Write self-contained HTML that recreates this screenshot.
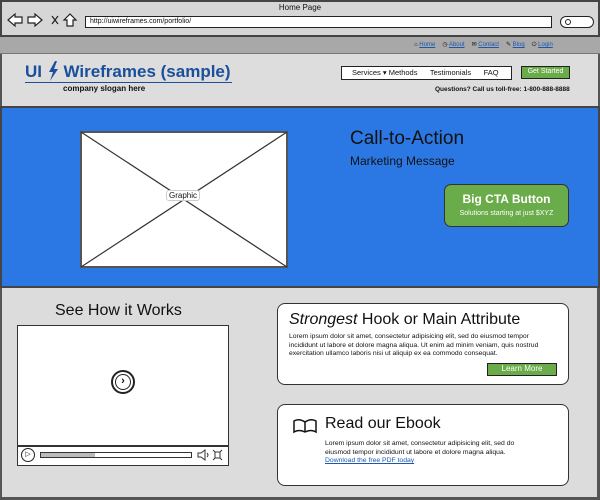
<!DOCTYPE html>
<html><head><style>
*{margin:0;padding:0;box-sizing:border-box}
body{width:600px;height:500px;overflow:hidden;background:#dcdcdc;font-family:"Liberation Sans",sans-serif;position:relative;color:#111}
.a{position:absolute}
a{color:#1a57b0;text-decoration:underline}
</style></head><body>
<!-- browser chrome -->
<div class="a" style="left:0;top:0;width:600px;height:37px;background:#d6d6d6;border:2px solid #444"></div>
<div class="a" style="left:0;top:3px;width:600px;text-align:center;font-size:8px">Home Page</div>
<svg class="a" style="left:6px;top:12px" width="76" height="16" viewBox="0 0 76 16" fill="#fff" stroke="#222" stroke-width="1.2">
<path d="M2 8 L9 2 V5 H16 V11 H9 V14 Z"/>
<path d="M36 8 L29 2 V5 H22 V11 H29 V14 Z"/>
<path d="M46 4 L52 12 M52 4 L46 12" fill="none"/>
<path d="M58 8 L64 2 L70 8 H67 V14 H61 V8 Z"/>
</svg>
<div class="a" style="left:85px;top:16px;width:467px;height:12px;background:#fff;border:1.5px solid #222;font-size:7px;padding-left:4px;line-height:9px">http://uiwireframes.com/portfolio/</div>
<div class="a" style="left:560px;top:16px;width:34px;height:12px;background:#fff;border:1.5px solid #222;border-radius:7px"><div style="position:absolute;left:4px;top:2px;width:6px;height:6px;border:1.2px solid #222;border-radius:50%"></div></div>
<!-- dark bar -->
<div class="a" style="left:0;top:37px;width:600px;height:17px;background:#a8a8a8;border-bottom:1px solid #777"></div>
<div class="a" style="left:414px;top:41px;height:9px;font-size:6px;line-height:9px;display:flex;gap:7px;align-items:center;white-space:nowrap">
<span>⌂ <a>Home</a></span><span>◷ <a>About</a></span><span>✉ <a>Contact</a></span><span>✎ <a>Blog</a></span><span>⏻ <a>Login</a></span></div>
<!-- header -->
<div class="a" style="left:0;top:54px;width:600px;height:52px;background:#dddddd;border-left:2px solid #555;border-right:2px solid #555"></div>
<div class="a" style="left:25px;top:61px;width:207px;font-size:17px;font-weight:bold;color:#1a4f9c;border-bottom:1.5px solid #1a4f9c;line-height:20px;white-space:nowrap">UI <svg width="12" height="20" style="vertical-align:-4px"><path d="M8 0 L2 11 H6 L3 20 L11 8 H7 L10 0 Z" fill="#1a4f9c"/></svg> Wireframes (sample)</div>
<div class="a" style="left:63px;top:84px;font-size:8px;font-weight:bold">company slogan here</div>
<div class="a" style="left:341px;top:66px;width:171px;height:14px;background:#fff;border:1.5px solid #222;font-size:7.5px;line-height:11px;padding-left:10px;white-space:nowrap">Services ▾ Methods &nbsp;&nbsp;&nbsp;&nbsp; Testimonials &nbsp;&nbsp;&nbsp;&nbsp; FAQ</div>
<div class="a" style="left:521px;top:66px;width:49px;height:13px;background:#6aab4a;border:1.5px solid #222;color:#fff;font-size:7px;text-align:center;line-height:10px">Get Started</div>
<div class="a" style="left:435px;top:86px;font-size:6.5px;font-weight:bold;white-space:nowrap">Questions? Call us toll-free: 1-800-888-8888</div>
<!-- hero -->
<div class="a" style="left:0;top:106px;width:600px;height:182px;background:#2b78e4;border:2px solid #444"></div>
<svg class="a" style="left:80px;top:131px" width="208" height="137"><rect x="1" y="1" width="206" height="135" fill="#fff" stroke="#555" stroke-width="2"/><path d="M1 1 L207 136 M207 1 L1 136" stroke="#333" stroke-width="1.2"/></svg>
<div class="a" style="left:166px;top:190px;background:#fff;border:1px solid #ccc;border-radius:3px;font-size:8px;padding:0 2px">Graphic</div>
<div class="a" style="left:350px;top:128px;font-size:19px;color:#111">Call-to-Action</div>
<div class="a" style="left:350px;top:154px;font-size:12px;color:#111">Marketing Message</div>
<div class="a" style="left:444px;top:184px;width:125px;height:43px;background:#6aab4a;border:1.5px solid #333;border-radius:7px;color:#fff;text-align:center">
<div style="font-size:12px;font-weight:bold;margin-top:7px">Big CTA Button</div><div style="font-size:7px;margin-top:4px">Solutions starting at just $XYZ</div></div>
<!-- bottom -->
<div class="a" style="left:0;top:288px;width:600px;height:212px;border-left:2px solid #555;border-right:3px solid #555"></div>
<div class="a" style="left:55px;top:302px;font-size:16px">See How it Works</div>
<div class="a" style="left:17px;top:325px;width:212px;height:141px;background:#fff;border:1.5px solid #333"></div>
<div class="a" style="left:111px;top:370px;width:24px;height:24px;border:2px solid #222;border-radius:50%"><div style="position:absolute;left:2px;top:2px;width:16px;height:16px;border:1.5px solid #222;border-radius:50%;font-size:11px;font-weight:bold;text-align:center;line-height:13px">›</div></div>
<div class="a" style="left:17px;top:445px;width:212px;height:1.5px;background:#333"></div>
<div class="a" style="left:21px;top:448px;width:14px;height:14px;border:1.2px solid #222;border-radius:50%;font-size:7px;text-align:center;line-height:12px">▷</div>
<div class="a" style="left:40px;top:452px;width:152px;height:6px;border:1px solid #333;background:linear-gradient(90deg,#bbb 36%,#fff 36%)"></div>
<svg class="a" style="left:196px;top:448px" width="28" height="14" fill="none" stroke="#333" stroke-width="1"><path d="M2 5 H5 L9 2 V12 L5 9 H2 Z M11 5 Q13 7 11 9"/><path d="M17 2 L19 4 H24 L26 2 M17 12 L19 10 H24 L26 12 M19 4 V10 M24 4 V10"/></svg>
<div class="a" style="left:277px;top:303px;width:292px;height:82px;background:#fff;border:1.5px solid #333;border-radius:8px"></div>
<div class="a" style="left:289px;top:311px;font-size:16px;white-space:nowrap"><i>Strongest</i> Hook or Main Attribute</div>
<div class="a" style="left:289px;top:333px;width:270px;font-size:6.8px;line-height:8.7px">Lorem ipsum dolor sit amet, consectetur adipisicing elit, sed do eiusmod tempor incididunt ut labore et dolore magna aliqua. Ut enim ad minim veniam, quis nostrud exercitation ullamco laboris nisi ut aliquip ex ea commodo consequat.</div>
<div class="a" style="left:487px;top:363px;width:70px;height:13px;background:#6aab4a;border:1.5px solid #222;color:#fff;font-size:8px;text-align:center;line-height:10px">Learn More</div>
<div class="a" style="left:277px;top:404px;width:292px;height:82px;background:#fff;border:1.5px solid #333;border-radius:8px"></div>
<svg class="a" style="left:292px;top:418px" width="26" height="16" fill="none" stroke="#111" stroke-width="1.5"><path d="M13 4 Q7 0 2 3 V14 Q7 11 13 14 Q19 11 24 14 V3 Q19 0 13 4 V14"/></svg>
<div class="a" style="left:325px;top:415px;font-size:16px">Read our Ebook</div>
<div class="a" style="left:325px;top:440px;width:215px;font-size:6.8px;line-height:8.7px">Lorem ipsum dolor sit amet, consectetur adipisicing elit, sed do eiusmod tempor incididunt ut labore et dolore magna aliqua.<br><a>Download the free PDF today</a></div>
<div class="a" style="left:0;top:497px;width:600px;height:3px;background:#555"></div>
</body></html>
